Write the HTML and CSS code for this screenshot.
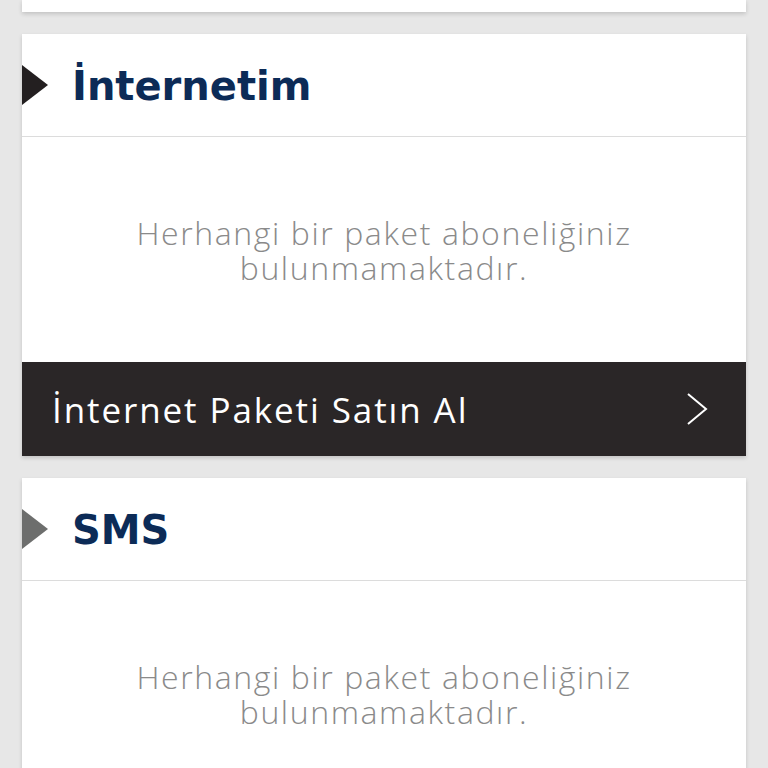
FILE: index.html
```html
<!DOCTYPE html>
<html lang="tr">
<head>
<meta charset="utf-8">
<link rel="stylesheet" href="styles.css">
</head>
<body>
<div class="page">
  <div class="card card-stub"></div>

  <section class="card">
    <div class="card-head">
      <span class="marker marker-dark"></span>
      <h2 class="title">İnternetim</h2>
    </div>
    <div class="card-body">
      <p class="empty">Herhangi bir paket aboneliğiniz<br>bulunmamaktadır.</p>
    </div>
    <a class="buy" href="#">
      <span class="buy-label">İnternet Paketi Satın Al</span>
      <svg class="chevron" width="22" height="32" viewBox="0 0 22 32"><path d="M2 1 L20 16 L2 31" fill="none" stroke="#ffffff" stroke-width="2"/></svg>
    </a>
  </section>

  <section class="card">
    <div class="card-head">
      <span class="marker marker-grey"></span>
      <h2 class="title">SMS</h2>
    </div>
    <div class="card-body">
      <p class="empty">Herhangi bir paket aboneliğiniz<br>bulunmamaktadır.</p>
    </div>
  </section>
</div>
</body>
</html>
```

FILE: styles.css
```css
html, body {
  margin: 0;
  padding: 0;
  background: #e7e7e7;
  height: 768px;
  overflow: hidden;
}

.page {
  display: flex;
  flex-direction: column;
  gap: 22px;
  padding: 0 22px;
}

.card {
  background: #ffffff;
  box-shadow: 0 2px 4px rgba(0, 0, 0, 0.16);
}

.card-stub {
  height: 12px;
}

.card-head {
  height: 102px;
  display: flex;
  align-items: center;
  border-bottom: 1px solid #dcdcdc;
}

.marker {
  width: 0;
  height: 0;
  border-top: 20px solid transparent;
  border-bottom: 20px solid transparent;
  border-left: 26px solid #231f20;
}

.marker-grey {
  border-left-color: #6d6e6d;
}

.title {
  margin: 2px 0 0 24px;
  font-family: "DejaVu Sans", "Open Sans", sans-serif;
  font-weight: 700;
  font-size: 40px;
  color: #0c2b57;
}

.card-body {
  height: 225px;
  display: flex;
  align-items: center;
  justify-content: center;
}

.empty {
  margin: 0;
  text-align: center;
  font-family: "Open Sans", Lato, sans-serif;
  font-weight: 300;
  font-size: 32px;
  line-height: 35px;
  letter-spacing: 1.6px;
  color: #8a8a8a;
}

.buy {
  height: 94px;
  display: flex;
  align-items: center;
  justify-content: space-between;
  padding: 0 38px 0 30px;
  background: #2a2627;
  text-decoration: none;
}

.buy-label {
  font-family: "Open Sans", "Liberation Sans", sans-serif;
  font-weight: 400;
  font-size: 35px;
  letter-spacing: 1.9px;
  color: #ffffff;
}

.chevron {
  display: block;
}
```
